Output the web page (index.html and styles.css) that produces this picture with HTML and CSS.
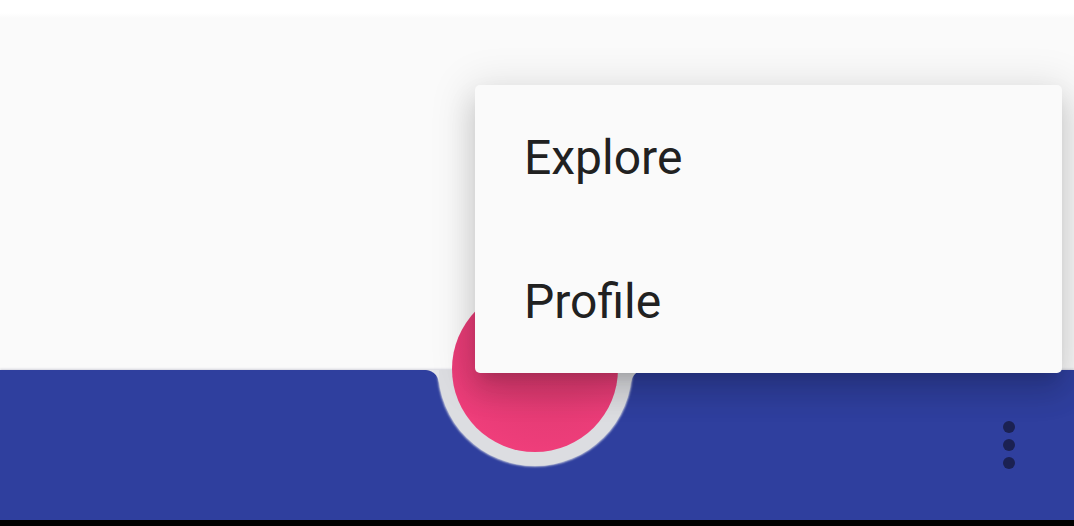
FILE: index.html
```html
<!DOCTYPE html>
<html lang="en">
<head>
<meta charset="utf-8">
<title>Bottom app bar menu</title>
<link rel="stylesheet" href="styles.css">
</head>
<body>
<div class="page">
  <div class="top-strip"></div>
  <main class="content"></main>
  <footer class="appbar">
    <div class="appbar-clip">
      <div class="notch"></div>
      <div class="shoulder shoulder-left"></div>
      <div class="shoulder shoulder-right"></div>
    </div>
    <div class="fab"></div>
    <button class="more" aria-label="More">
      <svg width="12" height="48" viewBox="0 0 12 48" aria-hidden="true">
        <circle cx="6" cy="6" r="6"/>
        <circle cx="6" cy="24" r="6"/>
        <circle cx="6" cy="42" r="6"/>
      </svg>
    </button>
  </footer>
  <div class="nav-edge"></div>
  <ul class="menu">
    <li class="menu-item">Explore</li>
    <li class="menu-item">Profile</li>
  </ul>
</div>
</body>
</html>
```

FILE: styles.css
```css
html, body {
  margin: 0;
  padding: 0;
  background: #ffffff;
}

.page {
  position: relative;
  width: 1074px;
  height: 526px;
  display: flex;
  flex-direction: column;
  overflow: hidden;
  font-family: Roboto, "Noto Sans", sans-serif;
}

.top-strip {
  height: 18px;
  background: linear-gradient(to bottom, #ffffff 0, #ffffff 13px, #fafafa 18px);
}

.content {
  flex: 1;
  background: #fafafa;
}

.appbar {
  position: relative;
  height: 150px;
  background: #2f3f9e;
  display: flex;
  align-items: center;
  justify-content: flex-end;
  padding-right: 59px;
  box-shadow: 0 -1px 2px rgba(40, 40, 90, 0.18);
}

.appbar-clip {
  position: absolute;
  inset: 0;
  overflow: hidden;
}

.notch {
  position: absolute;
  left: 438px;
  top: -98px;
  width: 194px;
  height: 194px;
  border-radius: 50%;
  background: #dcdde1;
  box-shadow: 0 0 2px 1px rgba(215, 218, 228, 0.8);
}

.shoulder {
  position: absolute;
  top: 0;
  width: 14px;
  height: 14px;
}

.shoulder-left {
  left: 425px;
  background: radial-gradient(circle at 0 100%, rgba(232, 232, 236, 0) 13.5px, #e4e4e8 14.5px);
}

.shoulder-right {
  left: 631px;
  background: radial-gradient(circle at 100% 100%, rgba(232, 232, 236, 0) 13.5px, #dcdde1 14.5px);
}

.fab {
  position: absolute;
  left: 452px;
  top: -84px;
  width: 166px;
  height: 166px;
  border-radius: 50%;
  background: radial-gradient(circle at 58% 30%, #e03a70 0%, #e23b73 40%, #ec3d79 70%, #f8417f 100%);
}

.more {
  position: relative;
  border: 0;
  padding: 0;
  background: none;
  display: flex;
  fill: #1b2152;
}

.nav-edge {
  height: 6px;
  background: #000000;
}

.menu {
  position: absolute;
  left: 475px;
  top: 85px;
  width: 587px;
  margin: 0;
  padding: 0;
  list-style: none;
  background: #fafafa;
  border-radius: 5px;
  box-shadow:
    0 18px 28px 3px rgba(0, 0, 0, 0.11),
    0 6px 40px 8px rgba(0, 0, 0, 0.1),
    0 10px 12px -8px rgba(0, 0, 0, 0.12);
  display: flex;
  flex-direction: column;
}

.menu-item {
  height: 144px;
  display: flex;
  align-items: center;
  padding-left: 49px;
  font-size: 48px;
  color: #212121;
}
```
